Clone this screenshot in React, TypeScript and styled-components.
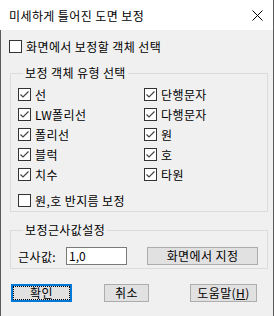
import React from "react"
import styled, { createGlobalStyle } from "styled-components"

const Global = createGlobalStyle`
    html, body {
        margin: 0;
        padding: 0;
        background: #f0f0f0;
    }
    * { box-sizing: border-box; }
`

const FONT = `"Noto Sans CJK KR", "Noto Sans", sans-serif`

const Window = styled.div`
    width: 274px;
    height: 316px;
    display: flex;
    flex-direction: column;
    font-family: ${FONT};
    font-size: 12px;
    color: #000;
    border-right: 1px solid #5a5a5a;
    overflow: hidden;
`

const TitleBar = styled.div`
    height: 30px;
    flex: none;
    background: #fff;
    display: flex;
    align-items: center;
    justify-content: space-between;
    padding: 0 10px 0 9px;
    letter-spacing: 0.4px;
`

const Body = styled.div`
    flex: 1;
    background: #f0f0f0;
    border-left: 1px solid #5a5a5a;
    padding: 10px 0 0 8px;
    display: flex;
    flex-direction: column;
`

const CheckRow = styled.label<{ $mt?: number }>`
    display: flex;
    align-items: center;
    gap: 4px;
    height: 13px;
    line-height: 13px;
    margin-top: ${({ $mt }) => $mt ?? 0}px;
    white-space: nowrap;
    letter-spacing: 0.4px;
`

const Box = styled.span`
    width: 13px;
    height: 13px;
    flex: none;
    border: 1px solid #333;
    background: #fff;
    display: flex;
    align-items: center;
    justify-content: center;
`

const Group = styled.fieldset<{ $top: number; $padTop: number; $padBottom: number }>`
    margin: ${({ $top }) => $top}px 0 0 1px;
    width: 258px;
    border: 1px solid #dcdcdc;
    padding: ${({ $padTop }) => $padTop}px 0 ${({ $padBottom }) => $padBottom}px 7px;
    min-width: 0;
`

const Legend = styled.legend`
    margin-left: 5px;
    padding: 0 2px;
    line-height: 14px;
    height: 14px;
    letter-spacing: 0.4px;
`

const TypeGrid = styled.div`
    display: grid;
    grid-template-columns: 126px 1fr;
    row-gap: 7px;
`

const Row = styled.div`
    display: flex;
    align-items: center;
    height: 18px;
`

const Label = styled.span`
    width: 48px;
    letter-spacing: 0.4px;
`

const Input = styled.div`
    width: 61px;
    height: 18px;
    background: #fff;
    border: 1px solid #7a7a7a;
    padding-left: 2px;
    line-height: 15px;
`

const Button = styled.div<{ $w: number; $ml?: number; $default?: boolean }>`
    width: ${({ $w }) => $w}px;
    height: 18px;
    margin-left: ${({ $ml }) => $ml ?? 0}px;
    background: #e1e1e1;
    border: ${({ $default }) => ($default ? "2px solid #0078d7" : "1px solid #adadad")};
    display: flex;
    align-items: center;
    justify-content: center;
    letter-spacing: 0.4px;
    line-height: 14px;
`

const Focus = styled.span`
    flex: 1;
    align-self: stretch;
    border: 1px dotted #000;
    display: flex;
    align-items: center;
    justify-content: center;
    line-height: 12px;
    padding-bottom: 1px;
`

const ButtonBar = styled.div`
    display: flex;
    margin-top: 15px;
    padding-left: 2px;
`

const Check = ({ checked, label, mt }: { checked?: boolean; label: string; mt?: number }) => (
    <CheckRow $mt={mt}>
        <Box>
            {checked && (
                <svg width="11" height="11" viewBox="0 0 11 11">
                    <polyline points="1.5,5.5 4,8 9.5,2.5" fill="none" stroke="#444" strokeWidth="1.2" />
                </svg>
            )}
        </Box>
        <span>{label}</span>
    </CheckRow>
)

export default function App() {
    const types = ["선", "단행문자", "LW폴리선", "다행문자", "폴리선", "원", "블럭", "호", "치수", "타원"]
    return (
        <>
            <Global />
            <Window>
                <TitleBar>
                    <span>미세하게 틀어진 도면 보정</span>
                    <svg width="11" height="11" viewBox="0 0 11 11">
                        <path d="M0.5 0.5 L10.5 10.5 M10.5 0.5 L0.5 10.5" stroke="#000" strokeWidth="1" />
                    </svg>
                </TitleBar>
                <Body>
                    <Check label="화면에서 보정할 객체 선택" />
                    <Group $top={13} $padTop={8} $padBottom={4}>
                        <Legend>보정 객체 유형 선택</Legend>
                        <TypeGrid>
                            {types.map(t => <Check key={t} checked label={t} />)}
                        </TypeGrid>
                        <Check mt={13} label="원,호 반지름 보정" />
                    </Group>
                    <Group $top={11} $padTop={10} $padBottom={3}>
                        <Legend>보정근사값설정</Legend>
                        <Row>
                            <Label>근사값:</Label>
                            <Input>1,0</Input>
                            <Button $w={111} $ml={20}>화면에서 지정</Button>
                        </Row>
                    </Group>
                    <ButtonBar>
                        <Button $w={61} $default><Focus>확인</Focus></Button>
                        <Button $w={45} $ml={32}>취소</Button>
                        <Button $w={67} $ml={41}>도움말(<u>H</u>)</Button>
                    </ButtonBar>
                </Body>
            </Window>
        </>
    )
}
